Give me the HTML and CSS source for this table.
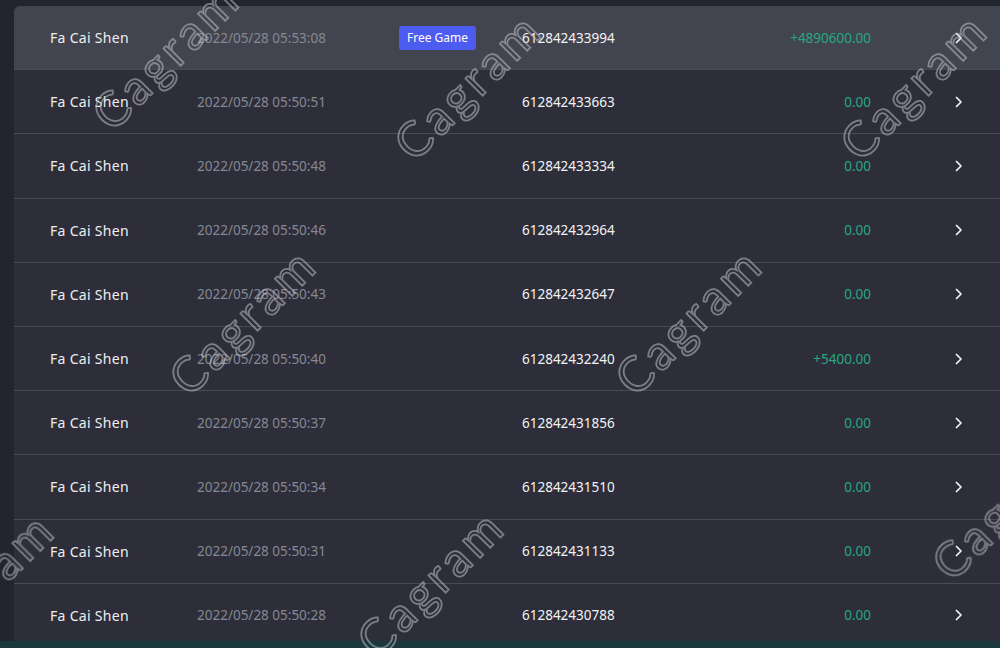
FILE: index.html
```html
<!DOCTYPE html>
<html lang="en">
<head>
    <meta charset="UTF-8">
    <meta name="viewport" content="width=device-width, initial-scale=1.0">
    <title>Game History</title>
    <link rel="stylesheet" href="styles.css">
</head>
<body>
    <div class="page">
        <div class="history">
            <div class="row active">
                <span class="name">Fa Cai Shen</span>
                <span class="time">2022/05/28 05:53:08</span>
                <span class="tag"><em class="badge">Free Game</em></span>
                <span class="round">612842433994</span>
                <span class="amount">+4890600.00</span>
                <span class="more"><svg width="8" height="12" viewBox="0 0 8 12"><polyline points="1.5,1.5 6,6 1.5,10.5"/></svg></span>
            </div>
            <div class="row">
                <span class="name">Fa Cai Shen</span>
                <span class="time">2022/05/28 05:50:51</span>
                <span class="tag"></span>
                <span class="round">612842433663</span>
                <span class="amount">0.00</span>
                <span class="more"><svg width="8" height="12" viewBox="0 0 8 12"><polyline points="1.5,1.5 6,6 1.5,10.5"/></svg></span>
            </div>
            <div class="row">
                <span class="name">Fa Cai Shen</span>
                <span class="time">2022/05/28 05:50:48</span>
                <span class="tag"></span>
                <span class="round">612842433334</span>
                <span class="amount">0.00</span>
                <span class="more"><svg width="8" height="12" viewBox="0 0 8 12"><polyline points="1.5,1.5 6,6 1.5,10.5"/></svg></span>
            </div>
            <div class="row">
                <span class="name">Fa Cai Shen</span>
                <span class="time">2022/05/28 05:50:46</span>
                <span class="tag"></span>
                <span class="round">612842432964</span>
                <span class="amount">0.00</span>
                <span class="more"><svg width="8" height="12" viewBox="0 0 8 12"><polyline points="1.5,1.5 6,6 1.5,10.5"/></svg></span>
            </div>
            <div class="row">
                <span class="name">Fa Cai Shen</span>
                <span class="time">2022/05/28 05:50:43</span>
                <span class="tag"></span>
                <span class="round">612842432647</span>
                <span class="amount">0.00</span>
                <span class="more"><svg width="8" height="12" viewBox="0 0 8 12"><polyline points="1.5,1.5 6,6 1.5,10.5"/></svg></span>
            </div>
            <div class="row">
                <span class="name">Fa Cai Shen</span>
                <span class="time">2022/05/28 05:50:40</span>
                <span class="tag"></span>
                <span class="round">612842432240</span>
                <span class="amount">+5400.00</span>
                <span class="more"><svg width="8" height="12" viewBox="0 0 8 12"><polyline points="1.5,1.5 6,6 1.5,10.5"/></svg></span>
            </div>
            <div class="row">
                <span class="name">Fa Cai Shen</span>
                <span class="time">2022/05/28 05:50:37</span>
                <span class="tag"></span>
                <span class="round">612842431856</span>
                <span class="amount">0.00</span>
                <span class="more"><svg width="8" height="12" viewBox="0 0 8 12"><polyline points="1.5,1.5 6,6 1.5,10.5"/></svg></span>
            </div>
            <div class="row">
                <span class="name">Fa Cai Shen</span>
                <span class="time">2022/05/28 05:50:34</span>
                <span class="tag"></span>
                <span class="round">612842431510</span>
                <span class="amount">0.00</span>
                <span class="more"><svg width="8" height="12" viewBox="0 0 8 12"><polyline points="1.5,1.5 6,6 1.5,10.5"/></svg></span>
            </div>
            <div class="row">
                <span class="name">Fa Cai Shen</span>
                <span class="time">2022/05/28 05:50:31</span>
                <span class="tag"></span>
                <span class="round">612842431133</span>
                <span class="amount">0.00</span>
                <span class="more"><svg width="8" height="12" viewBox="0 0 8 12"><polyline points="1.5,1.5 6,6 1.5,10.5"/></svg></span>
            </div>
            <div class="row">
                <span class="name">Fa Cai Shen</span>
                <span class="time">2022/05/28 05:50:28</span>
                <span class="tag"></span>
                <span class="round">612842430788</span>
                <span class="amount">0.00</span>
                <span class="more"><svg width="8" height="12" viewBox="0 0 8 12"><polyline points="1.5,1.5 6,6 1.5,10.5"/></svg></span>
            </div>
        </div>
    </div>

    <div class="footer-bar"></div>

    <div class="watermarks">
        <span class="mark" style="left:165px; top:55px">Cagram</span>
        <span class="mark" style="left:467px; top:85px">Cagram</span>
        <span class="mark" style="left:913px; top:85px">Cagram</span>
        <span class="mark" style="left:242px; top:320px">Cagram</span>
        <span class="mark" style="left:688px; top:320px">Cagram</span>
        <span class="mark" style="left:-20px; top:585px">Cagram</span>
        <span class="mark" style="left:430px; top:582px">Cagram</span>
        <span class="mark" style="left:1005px; top:505px">Cagram</span>
    </div>
</body>
</html>
```

FILE: styles.css
```css
html, body {
    margin: 0;
    height: 100%;
    overflow: hidden;
}
body {
    font-family: "Noto Sans", "Open Sans", sans-serif;
    font-size: 13.5px;
    background-color: #22252e;
    color: #e9e9ec;
}
.page {
    padding: 6px 0 0 14px;
}
.history {
    background-color: #2d2e3a;
    border-top-left-radius: 6px;
    overflow: hidden;
}
.row {
    display: grid;
    grid-template-columns: 147px 202px 123px 150px 199px 1fr;
    align-items: center;
    height: 63.2px;
    padding-left: 36px;
    border-bottom: 1px solid #484a55;
}
.row.active {
    background-color: #42454f;
}
.name {
    color: #eeeef0;
    font-size: 14px;
    letter-spacing: 0.3px;
}
.time {
    color: #868892;
}
.badge {
    display: inline-block;
    font-style: normal;
    font-size: 12px;
    line-height: 24px;
    padding: 0 8px;
    border-radius: 3px;
    background-color: #4d5cf0;
    color: #fff;
}
.round {
    color: #f2f2f4;
}
.amount {
    text-align: right;
    color: #25a880;
}
.more {
    padding-left: 84px;
    display: flex;
    align-items: center;
}
.more svg polyline {
    fill: none;
    stroke: #f4f4f6;
    stroke-width: 1.7;
    stroke-linecap: round;
    stroke-linejoin: round;
}
.footer-bar {
    position: fixed;
    left: 0;
    right: 0;
    bottom: 0;
    height: 7px;
    background-color: #1c383f;
}
.watermarks {
    position: fixed;
    inset: 0;
    pointer-events: none;
}
.mark {
    position: absolute;
    transform: translate(-50%, -50%) rotate(-45deg);
    font-family: "Lato", sans-serif;
    font-size: 48px;
    letter-spacing: 4px;
    color: transparent;
    -webkit-text-stroke: 1.8px rgba(190, 192, 198, 0.55);
    white-space: nowrap;
}
```
